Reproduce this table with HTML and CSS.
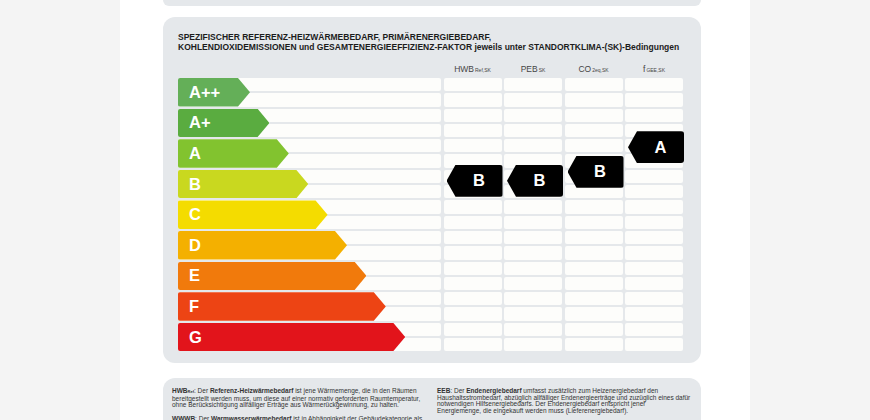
FILE: index.html
```html
<!DOCTYPE html>
<html lang="de">
<head>
<meta charset="utf-8">
<title>Energieausweis</title>
<link rel="stylesheet" href="styles.css">
</head>
<body>
<div class="page">
  <div class="card stub"></div>
  <section class="card chart-card">
    <h2 class="title">SPEZIFISCHER REFERENZ-HEIZWÄRMEBEDARF, PRIMÄRENERGIEBEDARF,<br>KOHLENDIOXIDEMISSIONEN und GESAMTENERGIEEFFIZIENZ-FAKTOR jeweils unter STANDORTKLIMA-(SK)-Bedingungen</h2>
    <div class="grid">
      <div class="hd"></div>
      <div class="hd">HWB<sub>Ref,SK</sub></div>
      <div class="hd">PEB<sub>SK</sub></div>
      <div class="hd">CO<sub>2eq,SK</sub></div>
      <div class="hd">f<sub>GEE,SK</sub></div>

      <div class="cell"><div class="rate r1">A++</div></div>
      <div class="cell"></div><div class="cell"></div><div class="cell"></div><div class="cell"></div>

      <div class="cell"><div class="rate r2">A+</div></div>
      <div class="cell"></div><div class="cell"></div><div class="cell"></div><div class="cell"></div>

      <div class="cell"><div class="rate r3">A</div></div>
      <div class="cell"></div><div class="cell"></div><div class="cell"></div>
      <div class="cell"><div class="tag tag-f">A</div></div>

      <div class="cell"><div class="rate r4">B</div></div>
      <div class="cell"><div class="tag tag-b">B</div></div>
      <div class="cell"><div class="tag tag-b">B</div></div>
      <div class="cell"><div class="tag tag-co">B</div></div>
      <div class="cell"></div>

      <div class="cell"><div class="rate r5">C</div></div>
      <div class="cell"></div><div class="cell"></div><div class="cell"></div><div class="cell"></div>

      <div class="cell"><div class="rate r6">D</div></div>
      <div class="cell"></div><div class="cell"></div><div class="cell"></div><div class="cell"></div>

      <div class="cell"><div class="rate r7">E</div></div>
      <div class="cell"></div><div class="cell"></div><div class="cell"></div><div class="cell"></div>

      <div class="cell"><div class="rate r8">F</div></div>
      <div class="cell"></div><div class="cell"></div><div class="cell"></div><div class="cell"></div>

      <div class="cell"><div class="rate r9">G</div></div>
      <div class="cell"></div><div class="cell"></div><div class="cell"></div><div class="cell"></div>
    </div>
  </section>
  <section class="card info">
    <div class="col">
      <p><b>HWB<sub>Ref</sub></b>: Der <b>Referenz-Heizwärmebedarf</b> ist jene Wärmemenge, die in den Räumen<br>bereitgestellt werden muss, um diese auf einer normativ geforderten Raumtemperatur,<br>ohne Berücksichtigung allfälliger Erträge aus Wärmerückgewinnung, zu halten.</p>
      <p><b>WWWB</b>: Der <b>Warmwasserwärmebedarf</b> ist in Abhängigkeit der Gebäudekategorie als</p>
    </div>
    <div class="col">
      <p><b>EEB</b>: Der <b>Endenergiebedarf</b> umfasst zusätzlich zum Heizenergiebedarf den<br>Haushaltsstrombedarf, abzüglich allfälliger Endenergieerträge und zuzüglich eines dafür<br>notwendigen Hilfsenergiebedarfs. Der Endenergiebedarf entspricht jener<br>Energiemenge, die eingekauft werden muss (Lieferenergiebedarf).</p>
    </div>
  </section>
</div>
</body>
</html>
```

FILE: styles.css
```css
* { box-sizing: border-box; }
html, body { margin: 0; height: 100%; }
body {
  background: #f4f4f4;
  font-family: "Liberation Sans", Arial, sans-serif;
  color: #222;
}
.page {
  width: 630px;
  margin: 0 auto;
  min-height: 100%;
  background: #fff;
  padding: 0 49px 0 43px;
  overflow: hidden;
}
.card {
  background: #e5e8eb;
  border-radius: 12px;
}
.stub {
  height: 6px;
  border-radius: 0 0 12px 12px;
}
.chart-card {
  margin-top: 11px;
  height: 346px;
  padding: 15px 18px 12px 15px;
}
.title {
  margin: 0;
  font-size: 8.5px;
  line-height: 10px;
  font-weight: bold;
  color: #1c1c1c;
  white-space: nowrap;
}
.grid {
  margin-top: 10px;
  display: grid;
  grid-template-columns: 263px repeat(4, 58px);
  grid-template-rows: 14px repeat(9, 28.6px);
  gap: 2px 2.5px;
}
.hd {
  font-size: 8.5px;
  line-height: 14px;
  color: #454545;
  text-align: center;
}
.hd sub {
  font-size: 5px;
  vertical-align: 0;
  margin-left: 1px;
}
.cell {
  position: relative;
  display: grid;
  grid-template-rows: 1fr 1fr;
  row-gap: 2px;
}
.cell::before,
.cell::after {
  content: "";
  grid-column: 1;
  background: #fdfdfb;
  border-radius: 2px;
}
.cell::before { grid-row: 1; }
.cell::after { grid-row: 2; }
.rate {
  grid-row: 1 / 3;
  grid-column: 1;
  z-index: 1;
  display: flex;
  align-items: center;
  padding-left: 11px;
  color: #fff;
  font-size: 16.5px;
  font-weight: bold;
  border-radius: 2px;
  clip-path: polygon(0 0, calc(100% - 12px) 0, 100% 50%, calc(100% - 12px) 100%, 0 100%);
}
.r1 { width: 72px; background: #64af58; }
.r2 { width: 91.4px; background: #5aac40; }
.r3 { width: 110.8px; background: #82c32f; }
.r4 { width: 130.2px; background: #c9d81f; }
.r5 { width: 149.6px; background: #f4dc00; }
.r6 { width: 169px; background: #f4b000; }
.r7 { width: 188.4px; background: #f17a0c; }
.r8 { width: 207.8px; background: #ed4414; }
.r9 { width: 227.2px; background: #e2141b; }
.tag {
  position: absolute;
  left: 3px;
  width: 56px;
  height: 32px;
  z-index: 2;
  display: flex;
  align-items: center;
  justify-content: center;
  padding-left: 9px;
  background: #000;
  color: #fff;
  font-size: 16.5px;
  font-weight: bold;
  border-radius: 3px;
  clip-path: polygon(9px 0, 100% 0, 100% 100%, 9px 100%, 0 50%);
}
.tag-b { top: -5px; }
.tag-co { top: -14px; }
.tag-f { top: -8px; }
.info {
  margin-top: 15px;
  padding: 10px 10px 10px 9px;
  display: grid;
  grid-template-columns: 256px 1fr;
  column-gap: 9px;
  font-size: 6.5px;
  line-height: 6.7px;
  color: #333;
}
.info p { margin: 0 0 7px; white-space: nowrap; }
.info sub { font-size: 4px; vertical-align: baseline; }
```
